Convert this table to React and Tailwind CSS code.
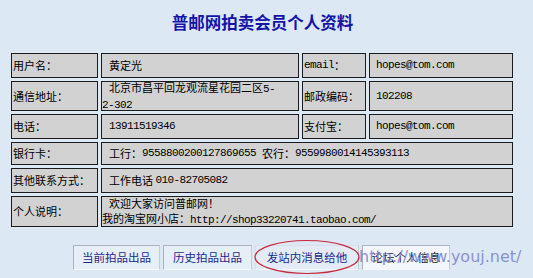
const cjk = "font-['Noto_Sans_CJK_SC',sans-serif]";

function M({ children }) {
  return (
    <span className="font-['Liberation_Mono','Noto_Sans_CJK_SC',monospace] text-[11px] tracking-[-0.6px]">
      {children}
    </span>
  );
}

function Cell({ children, className = '' }) {
  return (
    <div
      className={`flex items-center border border-[#1c1c1c] bg-[#d2d2d2] text-[11px] leading-[14.5px] text-black whitespace-nowrap ${className}`}
    >
      {children}
    </div>
  );
}

function Tab({ children, className = '' }) {
  return (
    <div
      className={`flex items-center justify-center h-[25px] text-[11.5px] border border-[#aab3bf] border-b-[#f4f8fc] border-r-[#c4ccd6] ${className}`}
    >
      {children}
    </div>
  );
}

export default function App() {
  return (
    <div className={`relative w-[533px] h-[278px] bg-[#dce8f4] overflow-hidden ${cjk}`}>
      <div className="h-[53px] w-[503px] ml-[11px] pt-[11px] text-center">
        <h1 className="text-[16.5px] leading-[22px] font-bold text-[#1414a8]">普邮网拍卖会员个人资料</h1>
      </div>

      <div className="ml-[11px] grid grid-cols-[87px_198px_64px_144px] grid-rows-[25px_30px_25px_23px_25px_31px] gap-[3px]">
        <Cell className="pl-[1px]">用户名：</Cell>
        <Cell className="pl-[7px]">黄定光</Cell>
        <Cell className="pl-[1px]"><M>email</M>：</Cell>
        <Cell className="pl-[6px]"><M>hopes@tom.com</M></Cell>

        <Cell className="pl-[1px]">通信地址：</Cell>
        <Cell>
          <div>
            <div className="pl-[7px]">北京市昌平回龙观流星花园二区<M>5-</M></div>
            <div><M>2-302</M></div>
          </div>
        </Cell>
        <Cell className="pl-[1px]">邮政编码：</Cell>
        <Cell className="pl-[6px]"><M>102208</M></Cell>

        <Cell className="pl-[1px]">电话：</Cell>
        <Cell className="pl-[7px]"><M>13911519346</M></Cell>
        <Cell className="pl-[1px]">支付宝：</Cell>
        <Cell className="pl-[6px]"><M>hopes@tom.com</M></Cell>

        <Cell className="pl-[1px]">银行卡：</Cell>
        <Cell className="col-span-3 pl-[7px]">
          工行：<M>9558800200127869655</M>
          <span className="ml-[6px]">农行：</span>
          <M>9559980014145393113</M>
        </Cell>

        <Cell className="pl-[1px]">其他联系方式：</Cell>
        <Cell className="col-span-3 pl-[7px]">
          工作电话&nbsp;<M>010-82705082</M>
        </Cell>

        <Cell className="pl-[1px]">个人说明：</Cell>
        <Cell className="col-span-3">
          <div>
            <div className="pl-[7px]">欢迎大家访问普邮网！</div>
            <div>我的淘宝网小店：<M>http://shop33220741.taobao.com/</M></div>
          </div>
        </Cell>
      </div>

      <div className="mt-[18px] ml-[73px] flex gap-[3px]">
        <Tab className="w-[87px] bg-[#e6eef8] text-[#1c2a8c]">当前拍品出品</Tab>
        <Tab className="w-[89px] bg-[#e6eef8] text-[#1c2a8c]">历史拍品出品</Tab>
        <Tab className="w-[104px] bg-[#e2ebf6] text-[#1c2a8c] border-[#d6e0ea]">发站内消息给他</Tab>
        <Tab className="w-[88px] bg-[#f3f6fa] text-[#202030] border-[#a4acb6] border-b-[#a4acb6]">论坛个人信息</Tab>
      </div>

      <svg className="absolute left-[252px] top-[238px]" width="112" height="38" viewBox="0 0 112 38">
        <ellipse cx="55" cy="19" rx="52" ry="16.5" fill="none" stroke="#c8283a" strokeWidth="1.2" />
      </svg>

      <div className="absolute left-[359px] top-[249px] text-[16px] leading-none font-['DejaVu_Sans',sans-serif] text-[#7a80c8]/85 pointer-events-none">
        http://www.youj.net/
      </div>
    </div>
  );
}
